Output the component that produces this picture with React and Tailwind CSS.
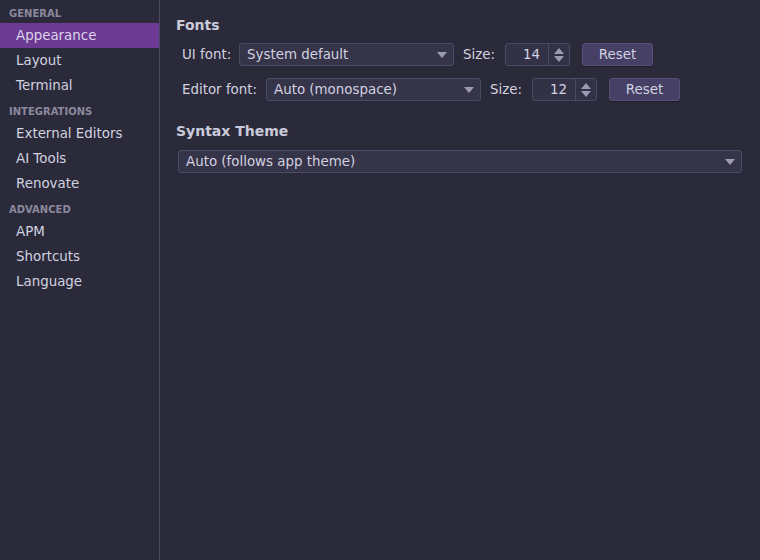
const sections = [
  { title: 'GENERAL', items: ['Appearance', 'Layout', 'Terminal'] },
  { title: 'INTEGRATIONS', items: ['External Editors', 'AI Tools', 'Renovate'] },
  { title: 'ADVANCED', items: ['APM', 'Shortcuts', 'Language'] },
];

function Caret() {
  return (
    <svg width="10" height="6" viewBox="0 0 10 6" className="shrink-0">
      <path d="M0 0 H10 L5 6 Z" fill="#9d9ab4" />
    </svg>
  );
}

function Combo({ value, width }) {
  return (
    <div
      className={`h-[23px] ${width} flex items-center justify-between pl-[7px] pr-[6px] pt-[1px] bg-[#363449] border border-[#4d4a66] rounded-[3px] text-[#d2d2e0]`}
    >
      <span>{value}</span>
      <Caret />
    </div>
  );
}

function Spin({ value }) {
  return (
    <div className="h-[23px] w-[65px] flex bg-[#333146] border border-[#4d4a66] rounded-[3px] text-[#d2d2e0]">
      <div className="flex-1 flex items-center justify-end pr-[8px] pt-[1px]">{value}</div>
      <div className="w-[21px] border-l border-[#4d4a66] flex flex-col items-center justify-center gap-[2px]">
        <svg width="10" height="6" viewBox="0 0 10 6">
          <path d="M0 6 H10 L5 0 Z" fill="#9d9ab4" />
        </svg>
        <svg width="10" height="6" viewBox="0 0 10 6">
          <path d="M0 0 H10 L5 6 Z" fill="#9d9ab4" />
        </svg>
      </div>
    </div>
  );
}

function ResetButton() {
  return (
    <button className="h-[23px] w-[71px] pt-[1px] bg-[#463f66] border border-[#57507a] rounded-[3px] text-[#d2d2e0] shadow-[0_1px_1px_rgba(0,0,0,0.35)]">
      Reset
    </button>
  );
}

export default function App() {
  return (
    <div
      className="w-[760px] h-[560px] flex bg-[#2b2a3a] text-[13.4px] leading-[20px] text-[#d2d2e0] overflow-hidden"
      style={{ fontFamily: '"DejaVu Sans", sans-serif' }}
    >
      <aside className="w-[160px] shrink-0 border-r border-[#4a4862] flex flex-col">
        {sections.map((s) => (
          <div key={s.title} className="flex flex-col">
            <div className="pt-[8px] pb-[3px] pl-[9px] h-[23px] text-[10px] leading-[12px] font-bold text-[#8b899e]">
              {s.title}
            </div>
            {s.items.map((item) => (
              <div
                key={item}
                className={`h-[25px] flex items-center pl-[16px] pt-[1px] ${
                  item === 'Appearance' ? 'bg-[#6d3a93] text-[#dcd4ec]' : 'text-[#d2d2e0]'
                }`}
              >
                {item}
              </div>
            ))}
          </div>
        ))}
      </aside>

      <main className="flex-1 pl-[16px] pr-[18px] pt-[15px]">
        <h2 className="h-[20px] text-[14px] font-bold text-[#cacada] leading-[20px]">Fonts</h2>
        <div className="mt-[8px] h-[23px] pl-[6px] flex items-center">
          <span className="w-[57px] pt-[1px]">UI font:</span>
          <Combo value="System default" width="w-[215px]" />
          <span className="ml-[9px] w-[42px] pt-[1px]">Size:</span>
          <Spin value="14" />
          <span className="ml-[12px] flex">
            <ResetButton />
          </span>
        </div>
        <div className="mt-[12px] h-[23px] pl-[6px] flex items-center">
          <span className="w-[84px] pt-[1px]">Editor font:</span>
          <Combo value="Auto (monospace)" width="w-[215px]" />
          <span className="ml-[9px] w-[42px] pt-[1px]">Size:</span>
          <Spin value="12" />
          <span className="ml-[12px] flex">
            <ResetButton />
          </span>
        </div>

        <h2 className="mt-[20px] h-[20px] text-[14px] font-bold text-[#cacada] leading-[20px]">Syntax Theme</h2>
        <div className="mt-[9px] pl-[2px]">
          <Combo value="Auto (follows app theme)" width="w-full" />
        </div>
      </main>
    </div>
  );
}
